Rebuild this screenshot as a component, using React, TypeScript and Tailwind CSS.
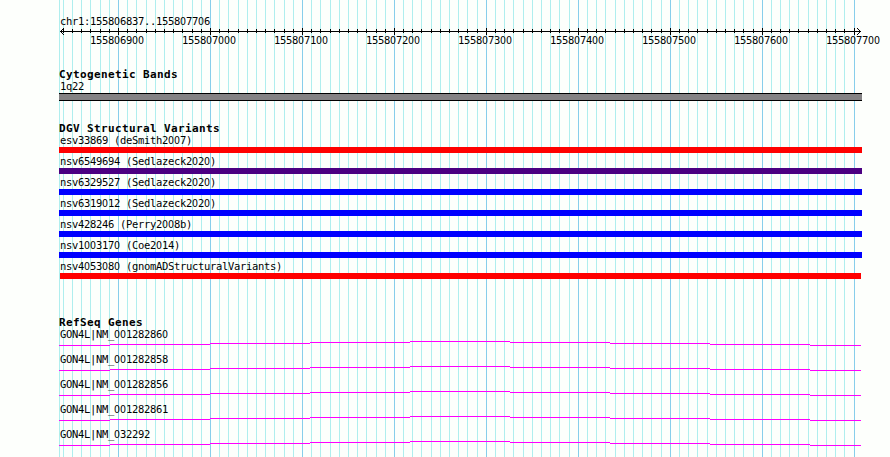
const GRID_START = 118.56;
const GRID_STEP = 9.195;

const ticks = Array.from({ length: 87 }, (_, n) => {
  const i = n - 6;
  return { x: Math.floor(GRID_START + i * GRID_STEP), major: i % 10 === 0 };
}).filter((t) => t.x < 860);

const rulerLabels = [
  "155806900",
  "155807000",
  "155807100",
  "155807200",
  "155807300",
  "155807400",
  "155807500",
  "155807600",
  "155807700",
];

const variants = [
  { name: "esv33869 (deSmith2007)", bar: "bg-[#ff0000] w-[803px]" },
  { name: "nsv6549694 (Sedlazeck2020)", bar: "bg-[#4b0082] w-[803px]" },
  { name: "nsv6329527 (Sedlazeck2020)", bar: "bg-[#0000ff] w-[803px]" },
  { name: "nsv6319012 (Sedlazeck2020)", bar: "bg-[#0000ff] w-[803px]" },
  { name: "nsv428246 (Perry2008b)", bar: "bg-[#0000ff] w-[803px]" },
  { name: "nsv1003170 (Coe2014)", bar: "bg-[#0000ff] w-[803px]" },
  { name: "nsv4053080 (gnomADStructuralVariants)", bar: "bg-[#ff0000] ml-px w-[801px]" },
];

const genes = [
  "GON4L|NM_001282860",
  "GON4L|NM_001282858",
  "GON4L|NM_001282856",
  "GON4L|NM_001282861",
  "GON4L|NM_032292",
];

// Intron line, stepped one pixel every hundred
const steps = [
  "w-[51px] mt-1",
  "w-[100px] mt-[3px]",
  "w-[100px] mt-0.5",
  "w-[100px] mt-px",
  "w-[100px] mt-0",
  "w-[100px] mt-px",
  "w-[100px] mt-0.5",
  "w-[100px] mt-[3px]",
  "w-[51px] mt-1",
];

// Zeros are set in a font without the inner dot
const Label = ({ text }: { text: string }) => (
  <div className="h-3 whitespace-pre pl-px font-['DejaVu_Sans_Mono',monospace] text-[10.5px] leading-[11px] tracking-[-0.321px]">
    {text.split(/(0+)/).map((part, i) =>
      part.startsWith("0") ? (
        <span key={i} className="font-['DejaVu_Sans_Condensed','DejaVu_Sans',sans-serif] [font-stretch:condensed] tracking-[-0.013px]">
          {part}
        </span>
      ) : (
        part
      )
    )}
  </div>
);

const Heading = ({ children }: { children: string }) => (
  <h2 className="h-3 whitespace-pre font-['DejaVu_Sans_Mono',monospace] text-[11px] font-bold leading-[12px] tracking-[0.377px]">
    {children}
  </h2>
);

const GridLines = () => (
  <svg className="absolute left-0 top-0" width="890" height="457" shapeRendering="crispEdges">
    <rect x="59" y="0" width="1" height="457" fill="#afeeee" />
    {ticks.map((t) => (
      <rect key={t.x} x={t.x} y="0" width="1" height="457" fill={t.major ? "#87ceeb" : "#afeeee"} />
    ))}
  </svg>
);

const Ruler = () => (
  <svg className="block" width="803" height="9" viewBox="59 27 803 9" shapeRendering="crispEdges">
    <rect x="60" y="31" width="801" height="1" />
    {ticks.map((t) => (
      <rect key={t.x} x={t.x} y={t.major ? 28 : 29} width="1" height={t.major ? 7 : 4} />
    ))}
    {[1, 2, 3].map((d) => (
      <g key={d}>
        <rect x={60 + d} y={31 - d} width="1" height="1" />
        <rect x={60 + d} y={31 + d} width="1" height="1" />
        <rect x={860 - d} y={31 - d} width="1" height="1" />
        <rect x={860 - d} y={31 + d} width="1" height="1" />
      </g>
    ))}
  </svg>
);

const GeneLine = () => (
  <div className="flex h-[5px] items-start">
    {steps.map((step, i) => (
      <div key={i} className={`h-px shrink-0 bg-[#ff00ff] ${step}`} />
    ))}
  </div>
);

export default function App() {
  return (
    <div className="relative h-[457px] w-[890px] overflow-hidden bg-[#fdfffc] text-black">
      <GridLines />
      <main className="relative flex flex-col pl-[59px] pt-4">
        <Label text="chr1:155806837..155807706" />
        <div className="-mt-px">
          <Ruler />
        </div>
        <div className="-mt-px ml-[30px] flex gap-[37px]">
          {rulerLabels.map((label) => (
            <div key={label} className="w-[55px] shrink-0">
              <Label text={label} />
            </div>
          ))}
        </div>

        <section className="mt-[22px]">
          <Heading>Cytogenetic Bands</Heading>
          <Label text="1q22" />
          <div className="h-2 w-[803px] border-y border-black bg-[#848284]" />
        </section>

        <section className="mt-[22px]">
          <Heading>DGV Structural Variants</Heading>
          {variants.map((v) => (
            <div key={v.name} className="h-[21px]">
              <Label text={v.name} />
              <div className={`h-1.5 ${v.bar}`} />
            </div>
          ))}
        </section>

        <section className="mt-[35px]">
          <Heading>RefSeq Genes</Heading>
          {genes.map((gene) => (
            <div key={gene} className="h-[25px]">
              <Label text={gene} />
              <GeneLine />
            </div>
          ))}
        </section>
      </main>
    </div>
  );
}
